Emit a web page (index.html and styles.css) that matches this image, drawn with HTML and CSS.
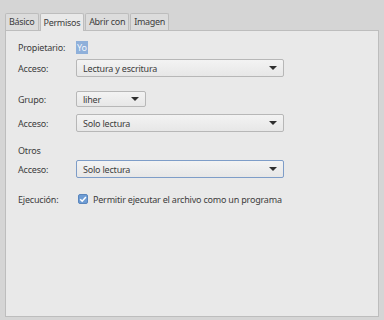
FILE: index.html
```html
<!doctype html>
<html>
<head>
<meta charset="utf-8">
<title>Propiedades</title>
<link rel="stylesheet" href="styles.css">
</head>
<body>
<div class="dialog">
	<!--pestañas-->
	<div class="tabs">
		<div class="tab">Básico</div>
		<div class="tab active">Permisos</div>
		<div class="tab">Abrir con</div>
		<div class="tab">Imagen</div>
	</div>

	<div class="panel">
		<div class="row r-owner">
			<span class="label">Propietario:</span>
			<span class="sel-text">Yo</span>
		</div>
		<div class="row r-combo">
			<span class="label">Acceso:</span>
			<div class="combo wide"><span>Lectura y escritura</span><i class="arrow"></i></div>
		</div>

		<div class="row r-group">
			<span class="label">Grupo:</span>
			<div class="combo small"><span>liher</span><i class="arrow"></i></div>
		</div>
		<div class="row r-combo2">
			<span class="label">Acceso:</span>
			<div class="combo wide"><span>Solo lectura</span><i class="arrow"></i></div>
		</div>

		<div class="row r-others">
			<span class="label">Otros</span>
		</div>
		<div class="row r-combo3">
			<span class="label">Acceso:</span>
			<div class="combo wide focus"><span>Solo lectura</span><i class="arrow"></i></div>
		</div>

		<div class="row r-exec">
			<span class="label">Ejecución:</span>
			<span class="check">
				<svg width="10" height="10" viewBox="0 0 10 10"><path d="M2.2 5.2 L4.2 7.2 L7.9 2.9" fill="none" stroke="#fff" stroke-width="1.5"/></svg>
			</span>
			<span class="check-text">Permitir ejecutar el archivo como un programa</span>
		</div>
	</div>

	<div class="footer">
		<button class="btn">Ayuda</button>
		<button class="btn">Cerrar</button>
	</div>
</div>
</body>
</html>
```

FILE: styles.css
```css
body {
	margin: 0;
	background: #d5d5d5;
	font-family: "Noto Sans", "DejaVu Sans", sans-serif;
	font-size: 9px;
	letter-spacing: -0.2px;
	color: #3c3c3c;
	overflow: hidden;
}

.dialog {
	padding: 12px 5px 0 5px;
}

.tabs {
	display: flex;
	height: 18px;
	align-items: flex-end;
}

.tab {
	height: 16px;
	line-height: 16px;
	padding: 0 3px;
	margin-right: 1px;
	background: #dcdcdc;
	border: 1px solid #bdbdbd;
	border-bottom: none;
	border-radius: 2px 2px 0 0;
	letter-spacing: -0.3px;
}

.tab.active {
	height: 17px;
	line-height: 17px;
	background: #e9e9e9;
	position: relative;
	top: 1px;
	z-index: 1;
}

.panel {
	height: 269px;
	background: #e9e9e9;
	border: 1px solid #bdbdbd;
	padding: 9px 12px 7px 12px;
}

.row {
	display: flex;
	align-items: center;
}

.label {
	width: 58px;
	flex: none;
}

.r-owner { height: 14px; }
.r-combo { margin-top: 5px; }
.r-group { margin-top: 14px; }
.r-combo2 { margin-top: 7px; }
.r-others { margin-top: 11px; height: 14px; }
.r-combo3 { margin-top: 3px; }
.r-exec { margin-top: 14px; height: 14px; }

.sel-text {
	background: #8fb0da;
	color: #f4f7fb;
	padding: 0 1px;
	line-height: 13px;
}

.combo {
	display: flex;
	align-items: center;
	justify-content: space-between;
	box-sizing: border-box;
	height: 18px;
	padding: 0 6px 0 6px;
	background: linear-gradient(#f3f3f3, #e7e7e7);
	border: 1px solid #b7b7b7;
	border-radius: 2px;
}

.combo.wide { width: 208px; }
.combo.small { width: 70px; height: 16px; }
.combo.focus { border-color: #7e9dc8; }

.arrow {
	width: 0;
	height: 0;
	border-left: 4px solid transparent;
	border-right: 4px solid transparent;
	border-top: 4px solid #2f2f2f;
}

.check {
	width: 10px;
	height: 10px;
	margin-left: 2px;
	margin-right: 5px;
	background: #6e9cd4;
	border: 1px solid #5a86bd;
	border-radius: 2px;
	box-sizing: border-box;
	display: flex;
}

.check svg { margin: -1px; }

.footer {
	display: flex;
	justify-content: space-between;
	margin: 4px -2px 0 -2px;
}

.btn {
	width: 56px;
	height: 20px;
	font-family: inherit;
	font-size: 9px;
	letter-spacing: -0.2px;
	color: #3c3c3c;
	background: linear-gradient(#f3f3f3, #e4e4e4);
	border: 1px solid #b9b9b9;
	border-radius: 2px;
	padding: 0;
}
```
